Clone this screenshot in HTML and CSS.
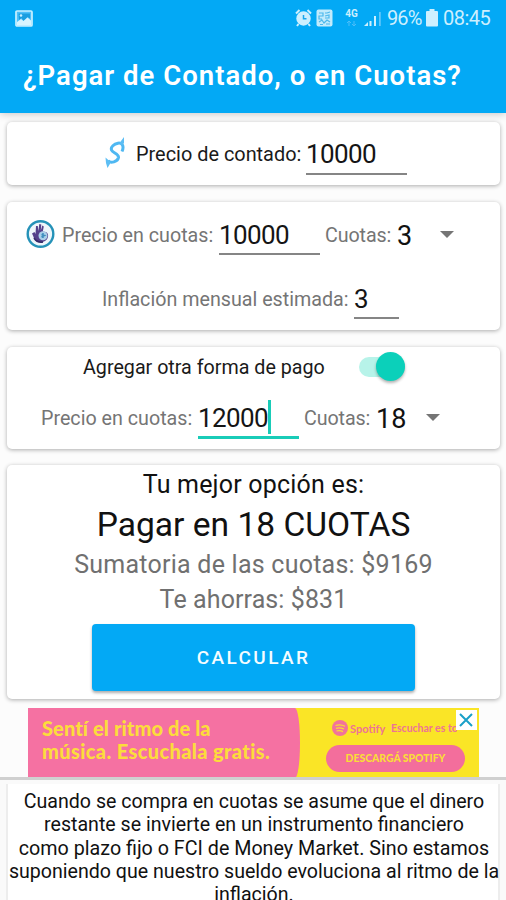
FILE: index.html
```html
<!DOCTYPE html>
<html lang="es">
<head>
<meta charset="utf-8">
<title>¿Pagar de Contado, o en Cuotas?</title>
<link rel="stylesheet" href="styles.css">
</head>
<body>
<header class="appbar">
  <div class="status">
    <svg class="gallery" width="18" height="17" viewBox="0 0 18 17"><rect x="1" y="1" width="16" height="15" rx="1" fill="#4dc0fa" stroke="#c9f0ff" stroke-width="1.7"/><path d="M3.500 3.500h11.500v5l-2.500-1.500-4 4L6.500 8 4 10z" fill="#199ee0"/><path d="M2 12l4-3 2.500 2 4-3.500 3.500 3v5H2z" fill="#d8f4ff"/><circle cx="6" cy="5.500" r="1.300" fill="#c9f0ff"/></svg>
    <svg class="alarm" width="17" height="18" viewBox="0 0 17 18"><circle cx="8.500" cy="9.500" r="7.200" fill="#cdeffe"/><path d="M1 4.500L4.500 1M16 4.500L12.500 1M3.500 15L2 17M13.500 15l1.500 2" stroke="#cdeffe" stroke-width="2"/><path d="M8.500 6v3.800h3" fill="none" stroke="#18a7ed" stroke-width="1.500"/></svg>
    <svg class="nfc" width="17" height="18" viewBox="0 0 17 18"><rect x="0.500" y="0.500" width="16" height="17" rx="2" fill="#c2ebfc"/><path d="M3 4h4v3H3v3h3M9 4h2l3-1M9 7l4-1v3H9M3 13l3-2 2 3 3-3 3 2M4 15.500h3M10 15h4" fill="none" stroke="#4db8ec" stroke-width="1.200"/></svg>
    <div class="net"><span>4G</span><svg width="11" height="6" viewBox="0 0 11 6"><path d="M1 2l2-2 2 2M3 0v5M6 3l2 2 2-2M8 0v5" fill="none" stroke="#4cbdf8" stroke-width="1"/></svg></div>
    <svg class="signal" width="17" height="17" viewBox="0 0 17 17"><path d="M0 16h4v-4zM5.500 11h2v5h-2zM10 6h2v10h-2z" fill="#cdeffe"/><path d="M15 2h1.800v14H15z" fill="#60c7fa"/></svg>
    <span class="pct">96%</span>
    <svg class="battery" width="12" height="18" viewBox="0 0 12 18"><path d="M3.500 0h5v2H11q1 0 1 1v13.500q0 1-1 1H1q-1 0-1-1V3q0-1 1-1h2.500z" fill="#cdf0ff"/></svg>
    <span class="time">08:45</span>
  </div>
  <h1 class="title"><span>¿Pagar de Contado, o en Cuotas?</span></h1>
</header>
<main>
  <section class="card cash">
    <svg class="dollar" width="20" height="32" viewBox="0 0 20 32"><path d="M17 14.500C19.500 9 17 5.500 13 6.200 9 7 5.500 10 6.500 13c1 3 7.500 3.500 7 7.500-.6 4-8 6.500-10.500 3" fill="none" stroke="#4fb8f2" stroke-width="3"/><path d="M14.500 6L19 0v6l-2 2.500zM5 24.500L.5 20.500 1 26l1.500 5 3-5z" fill="#5dbef4"/></svg>
    <label class="label dark l-cash">Precio de contado:</label>
    <div class="field wide">10000</div>
  </section>
  <section class="card installments">
    <div class="row first">
      <svg class="emblem" width="29" height="30" viewBox="0 0 29 30"><circle cx="14.500" cy="15" r="12.800" fill="#eef6fb" stroke="#2592b8" stroke-width="2.400"/><path d="M6 14.500l2.500-1.500 1 2 .5-8h1.800l.5 5 1-7 2 .5-.5 6 1.500-5 1.500 1-1 5c5 0 6 3 5 6-1 4-7 6-11 4-3-1.500-3-5-4.800-8z" fill="#54408b"/><circle cx="17" cy="16.800" r="4.500" fill="#a9cfe8"/><path d="M17 14v5M15.500 15.500l3 1-3 1.500" fill="none" stroke="#3e8dbd" stroke-width="1.500"/><path d="M8 19q3 5 9 4" fill="none" stroke="#352968" stroke-width="1.500"/></svg>
      <label class="label l-price">Precio en cuotas:</label>
      <div class="field wide">10000</div>
      <label class="label l-count">Cuotas:</label>
      <span class="select n3">3</span>
      <i class="caret"></i>
    </div>
    <div class="row inflation">
      <label class="label l-infl">Inflación mensual estimada:</label>
      <div class="field narrow">3</div>
    </div>
  </section>
  <section class="card extra">
    <div class="row toggle">
      <label class="label dark l-toggle">Agregar otra forma de pago</label>
      <div class="switch"><i></i></div>
    </div>
    <div class="row second">
      <label class="label l-price">Precio en cuotas:</label>
      <div class="field wide active">12000<i class="cursor"></i></div>
      <label class="label l-count">Cuotas:</label>
      <span class="select n18">18</span>
      <i class="caret"></i>
    </div>
  </section>
  <section class="card result">
    <p class="best">Tu mejor opción es:</p>
    <p class="answer">Pagar en 18 CUOTAS</p>
    <p class="sum">Sumatoria de las cuotas: $9169</p>
    <p class="save">Te ahorras: $831</p>
    <button class="calc">CALCULAR</button>
  </section>
  <aside class="ad">
    <div class="ad-copy"><span class="a1">Sentí el ritmo de la</span><span class="a2">música. Escuchala gratis.</span></div>
    <div class="ad-side">
      <div class="brand">
        <svg width="16" height="16" viewBox="0 0 16 16"><circle cx="8" cy="8" r="8" fill="#f2739b"/><path d="M3.500 5.500q5-1.700 9.500.8M4 8.300q4-1.300 8 .7M4.500 11q3.500-1 6.500.6" fill="none" stroke="#f8dd35" stroke-width="1.300"/></svg>
        <span class="spotify">Spotify</span><span class="listen">Escuchar es todo</span>
      </div>
      <div class="download"><span>DESCARGÁ SPOTIFY</span></div>
    </div>
    <div class="close"><svg width="20" height="20" viewBox="0 0 20 20"><path d="M4 4l12 12M16 4L4 16" stroke="#1aa0c8" stroke-width="2"/></svg></div>
  </aside>
  <section class="notes">
    <p><span>Cuando se compra en cuotas se asume que el dinero</span><span>restante se invierte en un instrumento financiero</span><span class="p3">como plazo fijo o FCI de Money Market. Sino estamos</span><span>suponiendo que nuestro sueldo evoluciona al ritmo de la</span><span>inflación.</span></p>
  </section>
</main>
</body>
</html>
```
FILE: styles.css
```css
* { box-sizing: border-box; }
body { margin: 0; height: 900px; overflow: hidden; background: #fcfcfc; font-family: Roboto, sans-serif; color: #111; }
p, h1 { margin: 0; }
svg { display: block; flex: none; }
span, label { white-space: nowrap; }

.appbar { height: 113px; background: #03a9f5; box-shadow: 0 1px 8px rgba(0,0,0,.22); position: relative; }
.status { height: 36px; padding: 0 15px; display: flex; align-items: center; color: #cdeffe; }
.gallery { margin-right: auto; }
.alarm { margin-right: 4px; }
.nfc { margin-right: 10px; }
.net { width: 17px; font-size: 10px; line-height: 10px; font-weight: 700; display: flex; flex-direction: column; align-items: center; gap: 2px; margin-right: 4px; }
.signal { margin-right: 6px; }
.pct { width: 34px; margin-right: 5px; font-size: 20px; letter-spacing: -.9px; }
.time { width: 48px; margin-left: 5px; font-size: 20px; letter-spacing: -.5px; }
.title { padding: 23px 0 0 23px; font-size: 27.500px; line-height: 34px; font-weight: 600; color: #fff; letter-spacing: 1.020px; }

main { padding: 9px 6px 0; }
.card { background: #fff; border-radius: 5px; box-shadow: 0 1px 4px rgba(0,0,0,.32); margin: 0 0 17px 1px; width: 493px; }
.row { display: flex; }
.label { font-size: 19.700px; line-height: 26px; color: #757575; flex: none; }
.dark { color: #1a1a1a; }
.field { position: relative; height: 39px; flex: none; border-bottom: 2px solid #858585; font-size: 26px; line-height: 37px; letter-spacing: -.6px; color: #151515; }
.wide { width: 101px; }
.narrow { width: 45px; }
.active { border-bottom: 3px solid #19ccb8; }
.cursor { position: absolute; left: 70px; top: 0; width: 3px; height: 34px; background: #19ccb8; }
.select { font-size: 27px; line-height: 32px; color: #111; flex: none; }
.caret { flex: none; border: 7px solid transparent; border-top-color: #757575; border-bottom: 0; height: 7px; }

.cash { height: 63px; display: flex; padding-left: 98px; }
.dollar { margin: 15px 11px 0 0; }
.cash .label { margin-top: 20px; font-size: 19.900px; }
.cash .field { margin-top: 14px; }
.l-cash { width: 170px; }

.installments { height: 128px; padding-left: 19px; }
.first { padding-top: 14px; height: 78px; }
.first .field { line-height: 38px; }
.emblem { margin: 3px 7px 0 0; }
.first .label { margin-top: 7px; }
.l-price { width: 157px; }
.l-count { width: 72px; margin-left: 5px; letter-spacing: -.1px; }
.first .select { margin-top: 4px; }
.n3 { width: 43px; }
.first .caret { margin-top: 15px; }
.inflation { padding-left: 76px; }
.inflation .label { margin-top: 7px; }
.l-infl { width: 252px; }
.inflation .field { line-height: 39px; }

.extra { height: 102px; margin-bottom: 16px; }
.toggle { height: 50px; padding: 8px 0 0 76px; }
.l-toggle { width: 276px; }
.switch { position: relative; width: 46px; height: 20px; margin-top: 2px; border-radius: 10px; background: #b7f3e9; }
.switch i { position: absolute; right: 0; top: -5px; width: 29px; height: 29px; border-radius: 50%; background: #0bd0ba; box-shadow: 0 2px 3px rgba(0,0,0,.3); }
.second { padding-left: 34px; }
.second .label { margin-top: 9px; }
.second .field { margin-top: 3px; }
.second .select { margin-top: 6px; }
.n18 { width: 50px; }
.second .caret { margin-top: 17px; }

.result { height: 234px; margin-bottom: 9px; text-align: center; }
.best { font-size: 25px; line-height: 40px; letter-spacing: .2px; }
.answer { font-size: 33.600px; line-height: 40px; }
.sum, .save { font-size: 25px; color: #707070; }
.sum { line-height: 40px; letter-spacing: .24px; }
.save { line-height: 30px; letter-spacing: .1px; }
.calc { display: block; margin: 9px 0 0 85px; width: 323px; height: 67px; border: 0; border-radius: 4px; background: #03a9f5; box-shadow: 0 2px 3px rgba(0,0,0,.32); color: #f5fcff; font: 500 19px Roboto, sans-serif; letter-spacing: 2.400px; }

.ad { position: relative; margin-left: 22px; width: 451px; height: 70px; display: flex; background: #fae526; overflow: hidden; font-family: Lato, sans-serif; }
.ad-copy { width: 272px; padding: 9px 0 0 14px; background: #f571a2; border-radius: 0 5px 5px 0 / 0 50% 50% 0; display: flex; flex-direction: column; color: #fcdc3c; font-size: 20px; line-height: 23px; font-weight: 900; }
.a1 { letter-spacing: .1px; }
.a2 { letter-spacing: .38px; }
.ad-side { padding: 12px 0 0 26px; color: #ee7395; }
.brand { display: flex; align-items: center; height: 16px; padding-left: 6px; font-size: 11px; font-weight: 700; }
.spotify { width: 41px; margin-left: 2px; font-size: 11px; }
.listen { width: 66px; overflow: hidden; font-size: 10.500px; }
.download { margin-top: 9px; width: 139px; height: 27px; border-radius: 14px; background: #f36e9c; color: #fadc38; font-size: 10.400px; line-height: 26px; font-weight: 900; text-align: center; }
.close { position: absolute; right: 2px; top: 2px; width: 21px; height: 20px; background: #fff; }

.notes { position: relative; margin: -1px -6px 0; border-top: 3px solid #d0d0d0; height: 130px; padding: 4px 6px 0; background: #fafafa; }
.notes p { display: flex; flex-direction: column; align-items: center; background: #fff; border: 1px solid #ededed; border-width: 0 2px; height: 120px; padding: 6px 0 0 2px; font-size: 19.600px; line-height: 23.300px; }
.p3 { font-size: 19.700px; }
```
